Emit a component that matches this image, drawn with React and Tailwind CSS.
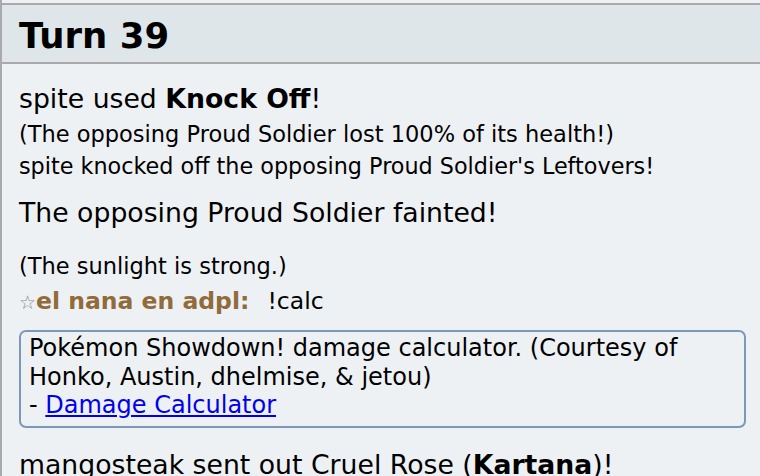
export default function App() {
  const f = { fontFamily: '"DejaVu Sans", Verdana, sans-serif' };
  return (
    <div className="w-[760px] h-[476px] overflow-hidden bg-[#eef1f4] border-l-2 border-[#aaaaaa] text-black" style={f}>
      <div className="h-[3px]" />
      <div className="border-y-2 border-[#aaaaaa] bg-[#dfe6e9] px-[17px] pt-[5px] h-[61px]">
        <h2 className="text-[35.5px] font-bold leading-[52px]">Turn 39</h2>
      </div>
      <div className="pl-[17px] pr-[14px]">
        <div className="mt-[17px] text-[26.7px] leading-[36px]">
          spite used <strong>Knock Off</strong>!
        </div>
        <div className="mt-[1px] text-[22.5px] leading-[32px]">(The opposing Proud Soldier lost 100% of its health!)</div>
        <div className="text-[22.3px] leading-[32px]">spite knocked off the opposing Proud Soldier's Leftovers!</div>
        <div className="mt-[13px] text-[26.7px] leading-[36px]">The opposing Proud Soldier fainted!</div>
        <div className="mt-[19px] text-[22.5px] leading-[32px]">(The sunlight is strong.)</div>
        <div className="mt-[3px] text-[23.5px] leading-[32px] flex items-baseline">
          <span className="text-[19px] text-[#8a8a8a]">☆</span>
          <strong className="text-[#906b3b]">el nana en adpl:</strong>
          <span className="ml-[18px]">!calc</span>
        </div>
        <div className="mt-[12px] border-2 border-[#7b98b9] rounded-[7px] px-[8px] pt-[2px] pb-[6px] text-[24px] leading-[28.5px]">
          Pokémon Showdown! damage calculator. (Courtesy of Honko, Austin, dhelmise, &amp; jetou)
          <br />- <a href="#" className="text-[#0000ee] underline">Damage Calculator</a>
        </div>
        <div className="mt-[19px] text-[26.7px] leading-[36px]">
          mangosteak sent out Cruel Rose (<strong>Kartana</strong>)!
        </div>
      </div>
    </div>
  );
}
